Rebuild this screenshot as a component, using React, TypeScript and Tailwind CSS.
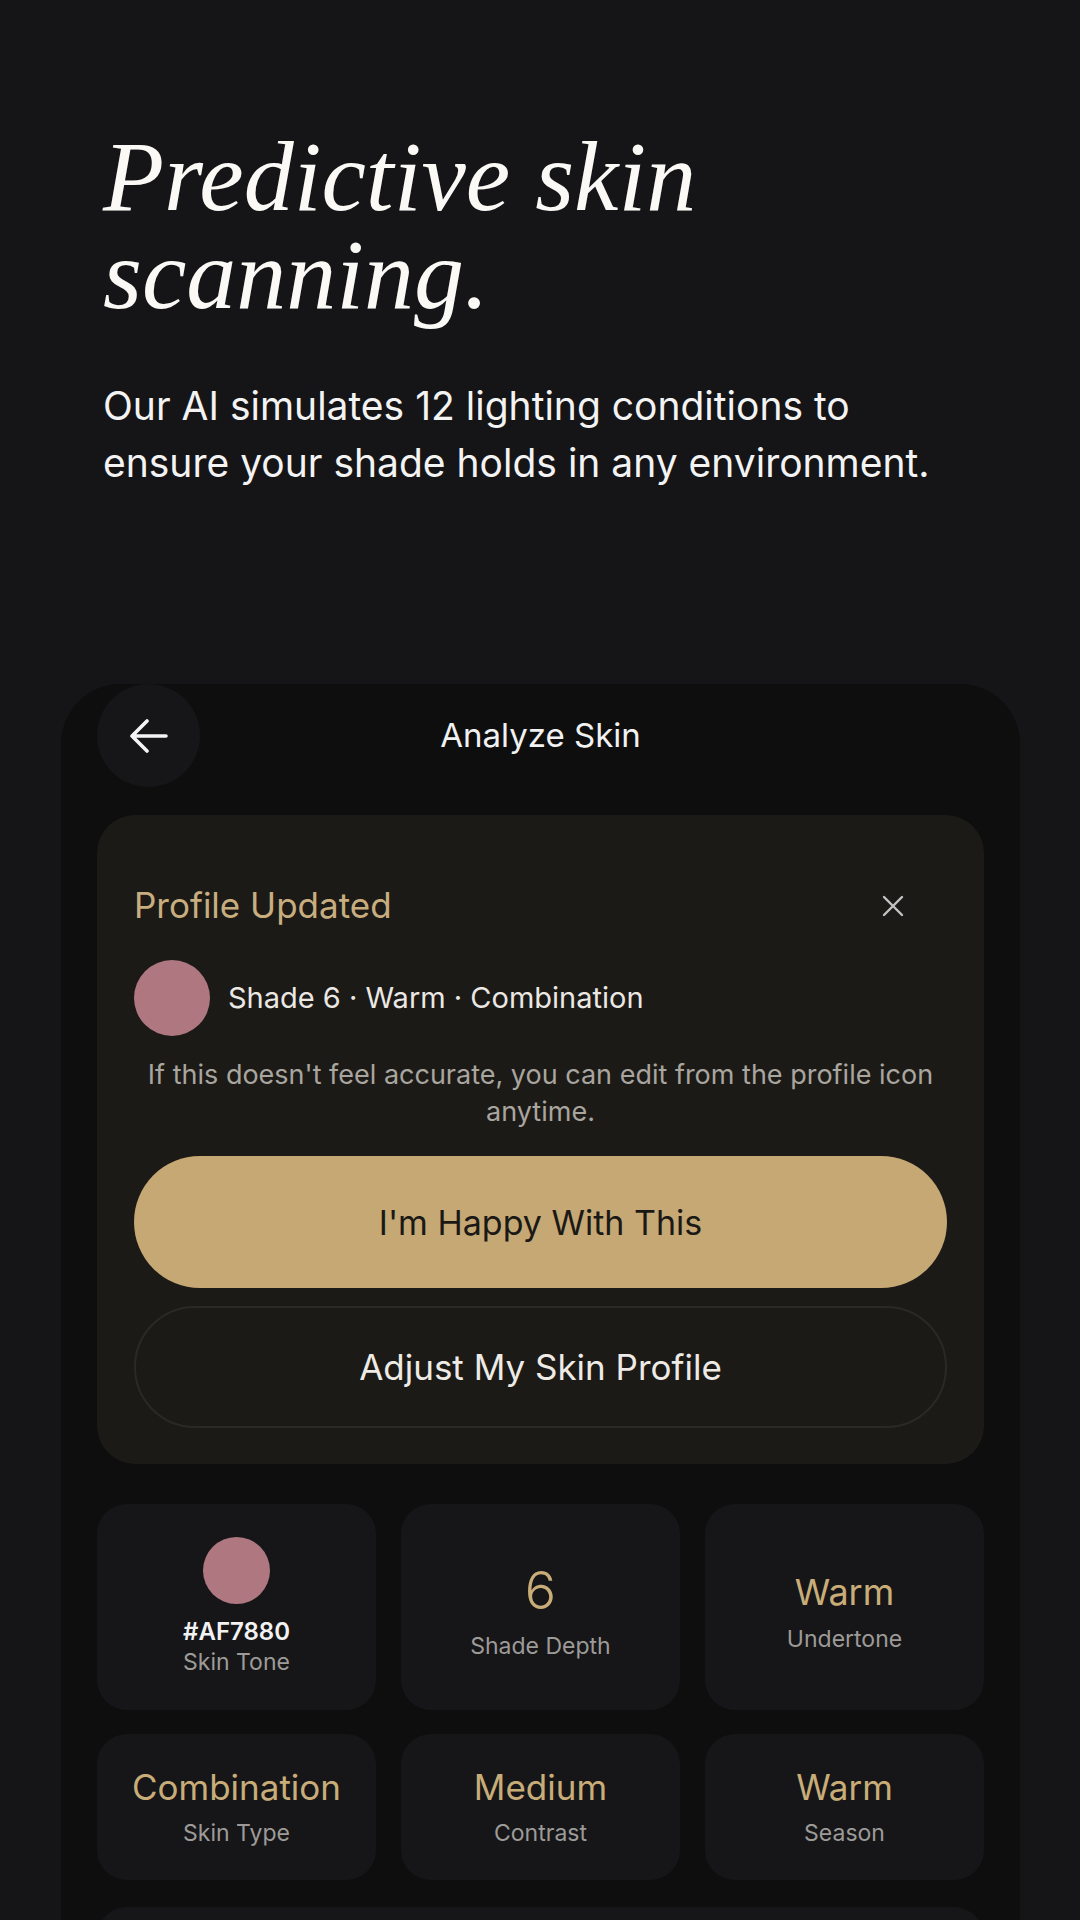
const SANS = { fontFamily: "Inter, 'Noto Sans', sans-serif" };

const STATS = [
  { value: "6", label: "Shade Depth", big: true },
  { value: "Warm", label: "Undertone" },
];

const TRAITS = [
  { value: "Combination", label: "Skin Type" },
  { value: "Medium", label: "Contrast" },
  { value: "Warm", label: "Season" },
];

function BackArrow() {
  return (
    <svg width="38" height="34" viewBox="0 0 38 34" fill="none">
      <path
        d="M17 2 2 17l15 15M2 17h34"
        stroke="#f4f4f4"
        strokeWidth="3.6"
        strokeLinecap="round"
        strokeLinejoin="round"
      />
    </svg>
  );
}

function CloseIcon() {
  return (
    <svg width="24" height="22" viewBox="0 0 24 22" fill="none">
      <path d="M3 2l18 18M21 2 3 20" stroke="#c4c4c4" strokeWidth="2.4" strokeLinecap="round" />
    </svg>
  );
}

export default function App() {
  return (
    <div className="h-[1920px] overflow-hidden bg-[#151517] text-white" style={SANS}>
      <section className="px-[103px] pt-[128px]">
        <h1
          className="text-[100px] leading-[98px] italic font-normal text-[#faf9f6]"
          style={{ fontFamily: "'Liberation Serif', 'DejaVu Serif', serif" }}
        >
          Predictive skin
          <br />
          scanning.
        </h1>
        <p className="mt-[53px] text-[39px] leading-[57px] text-[#f3f3f3] whitespace-nowrap">
          Our AI simulates 12 lighting conditions to
          <br />
          ensure your shade holds in any environment.
        </p>
      </section>

      <div className="mt-[193px] ml-[61px] mr-[60px] rounded-t-[60px] bg-[#0e0e0f] px-[36px] pb-10">
        <div className="grid grid-cols-[103px_1fr_103px] items-center">
          <button className="w-[103px] h-[103px] rounded-full bg-[#161618] flex items-center justify-center">
            <BackArrow />
          </button>
          <div className="text-center text-[33px] font-normal text-[#f1f1f1]">Analyze Skin</div>
          <div />
        </div>

        <div className="mt-[28px] rounded-[38px] bg-[#1c1a17] px-[37px] pt-[70px] pb-[36px]">
          <div className="flex items-center justify-between pr-[42px]">
            <span className="text-[35px] leading-[41px] text-[#c8ae7f]">Profile Updated</span>
            <CloseIcon />
          </div>
          <div className="mt-[34px] flex items-center gap-[18px]">
            <div className="w-[76px] h-[76px] rounded-full bg-[#af7880]" />
            <span className="text-[29px] text-[#ebe8e4]">Shade 6 · Warm · Combination</span>
          </div>
          <p className="mt-[20px] text-center text-[27px] leading-[37px] text-[#a9a59f]">
            If this doesn't feel accurate, you can edit from the profile icon anytime.
          </p>
          <button className="mt-[26px] w-full h-[132px] rounded-full bg-[#c5a874] text-[34px] text-[#1b1915]">
            I'm Happy With This
          </button>
          <button className="mt-[18px] w-full h-[122px] rounded-full border-2 border-[#2b2925] text-[35px] text-[#eeebe6]">
            Adjust My Skin Profile
          </button>
        </div>

        <div className="mt-[40px] grid grid-cols-3 gap-x-[25px] gap-y-[24px]">
          <div className="h-[206px] rounded-[30px] bg-[#161618] flex flex-col items-center justify-center">
            <div className="w-[67px] h-[67px] rounded-full bg-[#af7880]" />
            <div className="mt-[13px] text-[24px] leading-[30px] font-semibold text-[#f2f2f2]">#AF7880</div>
            <div className="text-[23px] leading-[30px] text-[#9d9b98]">Skin Tone</div>
          </div>
          {STATS.map((s) => (
            <div
              key={s.label}
              className="h-[206px] rounded-[30px] bg-[#161618] flex flex-col items-center justify-center pt-[12px]"
            >
              {s.big ? (
                <div className="text-[52px] leading-[52px] font-light text-[#c9ad78]">{s.value}</div>
              ) : (
                <div className="text-[36px] leading-[40px] text-[#c9ad78]">{s.value}</div>
              )}
              <div className={`${s.big ? "mt-[14px]" : "mt-[12px]"} text-[23px] leading-[30px] text-[#9d9b98]`}>
                {s.label}
              </div>
            </div>
          ))}
          {TRAITS.map((t) => (
            <div
              key={t.label}
              className="h-[146px] rounded-[30px] bg-[#161618] flex flex-col items-center justify-center"
            >
              <div className="text-[35px] leading-[40px] text-[#c9ad78]">{t.value}</div>
              <div className="mt-[11px] text-[23px] leading-[30px] text-[#9d9b98]">{t.label}</div>
            </div>
          ))}
        </div>

        <div className="mt-[27px] h-[200px] rounded-[30px] bg-[#161618]" />
      </div>
    </div>
  );
}
